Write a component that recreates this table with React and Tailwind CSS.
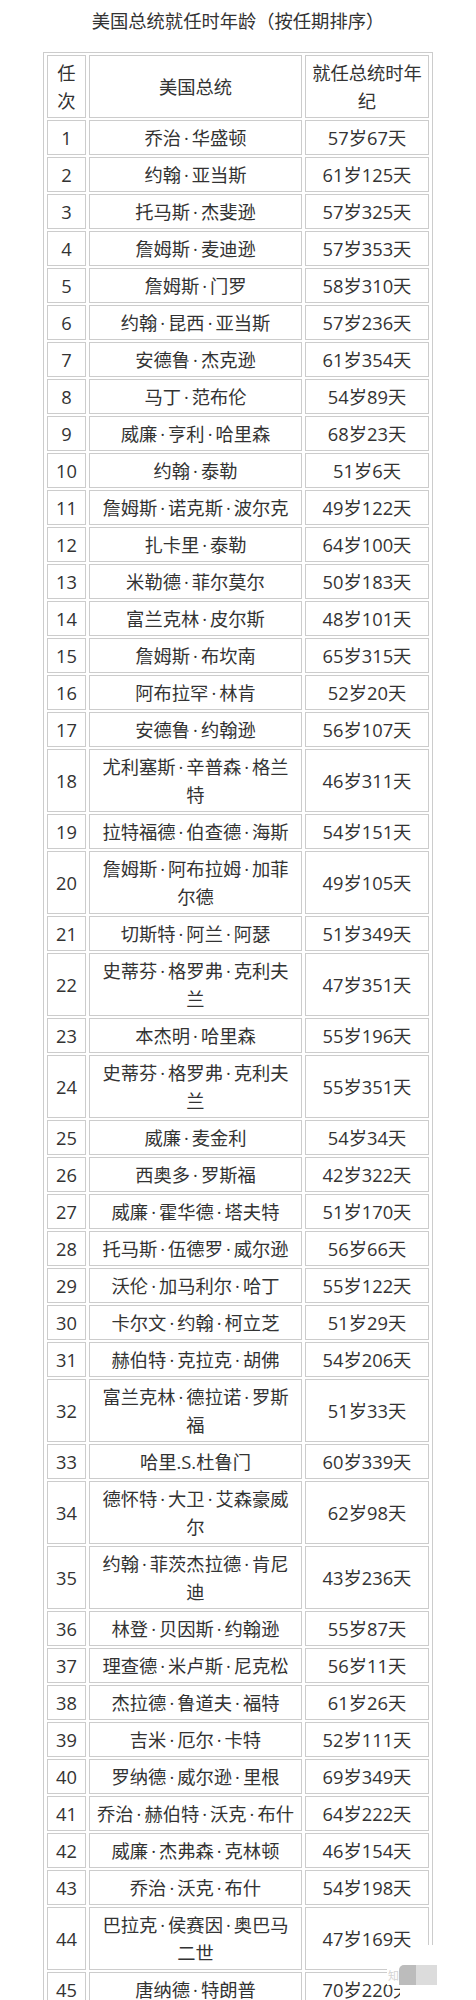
import React from "react";

const rows = [
  [1, "乔治·华盛顿", "57岁67天"],
  [2, "约翰·亚当斯", "61岁125天"],
  [3, "托马斯·杰斐逊", "57岁325天"],
  [4, "詹姆斯·麦迪逊", "57岁353天"],
  [5, "詹姆斯·门罗", "58岁310天"],
  [6, "约翰·昆西·亚当斯", "57岁236天"],
  [7, "安德鲁·杰克逊", "61岁354天"],
  [8, "马丁·范布伦", "54岁89天"],
  [9, "威廉·亨利·哈里森", "68岁23天"],
  [10, "约翰·泰勒", "51岁6天"],
  [11, "詹姆斯·诺克斯·波尔克", "49岁122天"],
  [12, "扎卡里·泰勒", "64岁100天"],
  [13, "米勒德·菲尔莫尔", "50岁183天"],
  [14, "富兰克林·皮尔斯", "48岁101天"],
  [15, "詹姆斯·布坎南", "65岁315天"],
  [16, "阿布拉罕·林肯", "52岁20天"],
  [17, "安德鲁·约翰逊", "56岁107天"],
  [18, "尤利塞斯·辛普森·格兰特", "46岁311天"],
  [19, "拉特福德·伯查德·海斯", "54岁151天"],
  [20, "詹姆斯·阿布拉姆·加菲尔德", "49岁105天"],
  [21, "切斯特·阿兰·阿瑟", "51岁349天"],
  [22, "史蒂芬·格罗弗·克利夫兰", "47岁351天"],
  [23, "本杰明·哈里森", "55岁196天"],
  [24, "史蒂芬·格罗弗·克利夫兰", "55岁351天"],
  [25, "威廉·麦金利", "54岁34天"],
  [26, "西奥多·罗斯福", "42岁322天"],
  [27, "威廉·霍华德·塔夫特", "51岁170天"],
  [28, "托马斯·伍德罗·威尔逊", "56岁66天"],
  [29, "沃伦·加马利尔·哈丁", "55岁122天"],
  [30, "卡尔文·约翰·柯立芝", "51岁29天"],
  [31, "赫伯特·克拉克·胡佛", "54岁206天"],
  [32, "富兰克林·德拉诺·罗斯福", "51岁33天"],
  [33, "哈里.S.杜鲁门", "60岁339天"],
  [34, "德怀特·大卫·艾森豪威尔", "62岁98天"],
  [35, "约翰·菲茨杰拉德·肯尼迪", "43岁236天"],
  [36, "林登·贝因斯·约翰逊", "55岁87天"],
  [37, "理查德·米卢斯·尼克松", "56岁11天"],
  [38, "杰拉德·鲁道夫·福特", "61岁26天"],
  [39, "吉米·厄尔·卡特", "52岁111天"],
  [40, "罗纳德·威尔逊·里根", "69岁349天"],
  [41, "乔治·赫伯特·沃克·布什", "64岁222天"],
  [42, "威廉·杰弗森·克林顿", "46岁154天"],
  [43, "乔治·沃克·布什", "54岁198天"],
  [44, "巴拉克·侯赛因·奥巴马二世", "47岁169天"],
  [45, "唐纳德·特朗普", "70岁220天"],
];

function Name({ text }) {
  const parts = text.split("·");
  return parts.map((p, i) => (
    <React.Fragment key={i}>
      {i > 0 && <span className="px-[3px]">·</span>}
      {p}
    </React.Fragment>
  ));
}

const cell = "border border-[#cccccc] py-[2.5px] text-center align-middle font-normal";

export default function App() {
  return (
    <div className="relative w-[476px] h-[2000px] overflow-hidden bg-white text-[#333333] text-[18.3px] leading-[28px] font-['Open_Sans','Noto_Sans_CJK_SC',sans-serif]">
      <div className="pt-[6.5px] text-center">美国总统就任时年龄（按任期排序）</div>
      <table className="ml-[43px] mt-[17.5px] w-[390px] table-fixed border-separate border-spacing-x-[3px] border-spacing-y-[2px] border border-[#cccccc]">
        <colgroup>
          <col className="w-[39px]" />
          <col className="w-[213px]" />
          <col className="w-[124px]" />
        </colgroup>
        <thead>
          <tr>
            <th className={`${cell} px-[5px]`}>任次</th>
            <th className={`${cell} px-[5px]`}>美国总统</th>
            <th className={`${cell} px-[5px]`}>就任总统时年纪</th>
          </tr>
        </thead>
        <tbody>
          {rows.map(([n, name, age]) => (
            <tr key={n}>
              <td className={`${cell} px-[2px]`}>{n}</td>
              <td className={`${cell} px-[5px]`}>
                <Name text={name} />
              </td>
              <td className={`${cell} px-[5px]`}>{age}</td>
            </tr>
          ))}
        </tbody>
      </table>

      <div className="absolute left-[427px] top-[1945px] w-[49px] h-[21px] bg-white" />
      <div className="absolute left-[387px] top-[1966px] w-[89px] h-[19px] bg-white" />
      <div className="absolute left-[400px] top-[1985px] w-[76px] h-[15px] bg-white" />
      <div className="absolute left-[388px] top-[1969px] text-[11px] leading-[14px] text-[#d4d4d4]">知</div>
      <div className="absolute left-[399px] top-[1965px] flex h-[20px]">
        <div className="w-[17px] h-full bg-[#bcbcbc] rounded-tl-[5px]" />
        <div className="w-[21px] h-full bg-[#dcdcdc]" />
      </div>
    </div>
  );
}
